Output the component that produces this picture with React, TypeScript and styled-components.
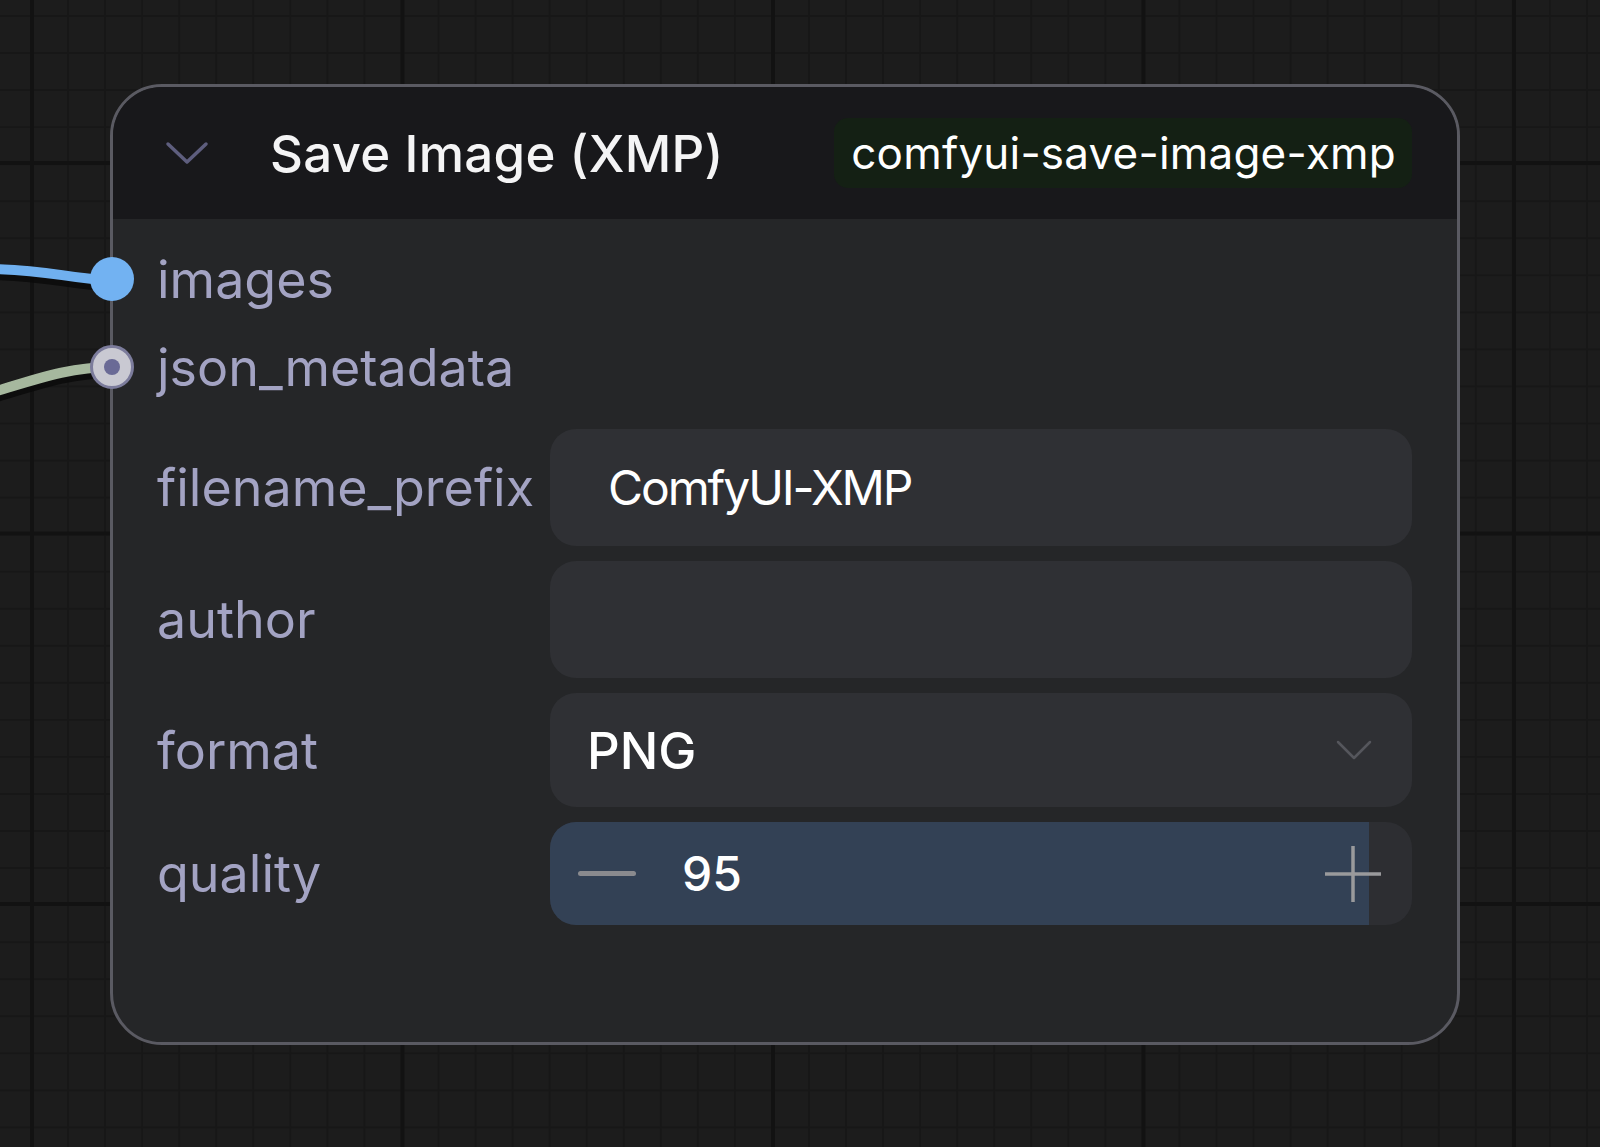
import React from "react";
import styled, { createGlobalStyle } from "styled-components";

const GlobalStyle = createGlobalStyle`
  html, body { margin: 0; padding: 0; background: #1c1c1c; }
  body { font-family: Inter, "Noto Sans", sans-serif; }
  * { box-sizing: border-box; }
`;

const Canvas = styled.div`
  position: relative;
  width: 1600px;
  height: 1147px;
  overflow: hidden;
  background-color: #1c1c1c;
  background-image:
    linear-gradient(to right, #121212 0 4px, transparent 4px),
    linear-gradient(to bottom, #121212 0 4px, transparent 4px),
    linear-gradient(to right, #171717 0 2px, transparent 2px),
    linear-gradient(to bottom, #171717 0 2px, transparent 2px);
  background-size: 370.5px 100%, 100% 370.5px, 37.05px 100%, 100% 37.05px;
  background-position: 30px 0, 0 161px, 30px 0, 0 15px;
`;

const Links = styled.svg`
  position: absolute;
  left: 0;
  top: 0;
  width: 1600px;
  height: 1147px;
  pointer-events: none;
`;

const Node = styled.div`
  position: absolute;
  left: 110px;
  top: 84px;
  width: 1350px;
  height: 961px;
  border: 3px solid #5a5a62;
  border-radius: 52px;
  background: #252628;
  display: flex;
  flex-direction: column;
`;

const Header = styled.div`
  height: 132px;
  flex: none;
  display: flex;
  align-items: center;
  padding: 0 45px 0 52px;
  background: #18181b;
  border-radius: 49px 49px 0 0;
`;

const Title = styled.div`
  margin-left: 61px;
  color: #f4f4f5;
  font-size: 51px;
  font-weight: 500;
  letter-spacing: 0.3px;
  white-space: nowrap;
`;

const Badge = styled.div`
  margin-left: auto;
  height: 70px;
  display: flex;
  align-items: center;
  padding: 0 16px 0 17px;
  border-radius: 14px;
  background: #142014;
  color: #ffffff;
  font-size: 44px;
  font-weight: 400;
  letter-spacing: 0.2px;
  white-space: nowrap;
`;

const Body = styled.div`
  display: flex;
  flex-direction: column;
  padding: 16px 45px 0 44px;
`;

const SlotRow = styled.div`
  position: relative;
  height: 88px;
  display: flex;
  align-items: center;
`;

const SlotDot = styled.div<{ $kind: "image" | "json" }>`
  position: absolute;
  left: -67px;
  top: 50%;
  width: 44px;
  height: 44px;
  margin-top: -22px;
  border-radius: 50%;
  ${(p) =>
    p.$kind === "image"
      ? `background: #72b2f2;`
      : `background: #c9c9d2; border: 3px solid #7c7c9c;
         display: flex; align-items: center; justify-content: center;`}
`;

const DotCore = styled.div`
  width: 16px;
  height: 16px;
  border-radius: 50%;
  background: #6a6a96;
`;

const Label = styled.span`
  color: #a3a3c3;
  font-size: 52px;
  white-space: nowrap;
`;

const Widgets = styled.div`
  display: flex;
  flex-direction: column;
  gap: 15px;
  margin-top: 18px;
`;

const WidgetRow = styled.div<{ $h: number }>`
  height: ${(p) => p.$h}px;
  display: grid;
  grid-template-columns: 393px 1fr;
  align-items: center;
`;

const Field = styled.div<{ $pad?: number; $strong?: boolean }>`
  height: 100%;
  display: flex;
  align-items: center;
  padding-left: ${(p) => p.$pad ?? 37}px;
  padding-right: 40px;
  border-radius: 26px;
  background: #2f3034;
  color: #ffffff;
  font-size: ${(p) => (p.$strong ? 51 : 48)}px;
  font-weight: ${(p) => (p.$strong ? 500 : 400)};
  letter-spacing: ${(p) => (p.$strong ? 0 : -2.1)}px;
  white-space: nowrap;
  overflow: hidden;
`;

const SelectChevron = styled.svg`
  margin-left: auto;
  width: 36px;
  height: 20px;
`;

const Stepper = styled.div`
  position: relative;
  height: 100%;
  border-radius: 26px;
  background: #2d2e32;
  overflow: hidden;
  display: flex;
  align-items: center;
`;

const StepFill = styled.div`
  position: absolute;
  left: 0;
  top: 0;
  bottom: 0;
  background: #334155;
`;

const Minus = styled.div`
  position: relative;
  margin-left: 28px;
  width: 58px;
  height: 5px;
  border-radius: 3px;
  background: #8a8a8e;
`;

const StepValue = styled.span`
  position: relative;
  margin-left: 46px;
  color: #ffffff;
  font-size: 48px;
  font-weight: 500;
`;

const Plus = styled.svg`
  position: relative;
  margin-left: auto;
  margin-right: 30px;
  width: 58px;
  height: 58px;
`;

const HeadChevron = styled.svg`
  width: 44px;
  height: 26px;
  flex: none;
`;

export default function App() {
  const quality = 95;
  return (
    <>
      <GlobalStyle />
      <Canvas>
        <Links viewBox="0 0 1600 1147">
          <path d="M -10 269 C 50 269, 70 280, 113 280" stroke="#0a0a0a" strokeWidth="16" fill="none" opacity="0.85" transform="translate(0,3)" />
          <path d="M -10 269 C 50 269, 70 280, 113 280" stroke="#70b0ef" strokeWidth="10" fill="none" />
          <path d="M -10 393 C 40 378, 70 367, 113 367" stroke="#0a0a0a" strokeWidth="16" fill="none" opacity="0.85" transform="translate(0,3)" />
          <path d="M -10 393 C 40 378, 70 367, 113 367" stroke="#a6b89e" strokeWidth="10" fill="none" />
        </Links>
        <Node>
          <Header>
            <HeadChevron viewBox="0 0 44 26">
              <polyline points="3,4 22,22 41,4" fill="none" stroke="#5e5e7e" strokeWidth="3.5" strokeLinecap="round" strokeLinejoin="round" />
            </HeadChevron>
            <Title>Save Image (XMP)</Title>
            <Badge>comfyui-save-image-xmp</Badge>
          </Header>
          <Body>
            <SlotRow>
              <SlotDot $kind="image" />
              <Label>images</Label>
            </SlotRow>
            <SlotRow>
              <SlotDot $kind="json">
                <DotCore />
              </SlotDot>
              <Label>json_metadata</Label>
            </SlotRow>
            <Widgets>
              <WidgetRow $h={117}>
                <Label>filename_prefix</Label>
                <Field $pad={58}>ComfyUI-XMP</Field>
              </WidgetRow>
              <WidgetRow $h={117}>
                <Label>author</Label>
                <Field />
              </WidgetRow>
              <WidgetRow $h={114}>
                <Label>format</Label>
                <Field $strong>
                  PNG
                  <SelectChevron viewBox="0 0 36 20">
                    <polyline points="2,2 18,18 34,2" fill="none" stroke="#55565c" strokeWidth="2.5" strokeLinecap="round" strokeLinejoin="round" />
                  </SelectChevron>
                </Field>
              </WidgetRow>
              <WidgetRow $h={103}>
                <Label>quality</Label>
                <Stepper>
                  <StepFill style={{ width: `${quality}%` }} />
                  <Minus />
                  <StepValue>{quality}</StepValue>
                  <Plus viewBox="0 0 58 58">
                    <line x1="29" y1="1" x2="29" y2="57" stroke="#9a9a9c" strokeWidth="3.5" />
                    <line x1="1" y1="29" x2="57" y2="29" stroke="#9a9a9c" strokeWidth="3.5" />
                  </Plus>
                </Stepper>
              </WidgetRow>
            </Widgets>
          </Body>
        </Node>
      </Canvas>
    </>
  );
}
